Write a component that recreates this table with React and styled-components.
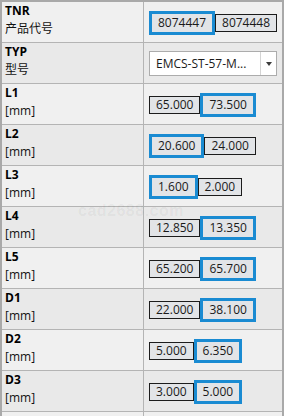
import React from "react";
import styled, { createGlobalStyle } from "styled-components";

const GlobalStyle = createGlobalStyle`
  html, body {
    margin: 0;
    padding: 0;
    background: #ffffff;
    overflow: hidden;
  }
  body {
    font-family: "Open Sans", "Noto Sans CJK SC", sans-serif;
    font-size: 12px;
    color: #111;
  }
`;

const rows = [
  { name: "TNR", unit: "产品代号", values: ["8074447", "8074448"], active: 0 },
  { name: "TYP", unit: "型号", select: "EMCS-ST-57-M..." },
  { name: "L1", unit: "[mm]", values: ["65.000", "73.500"], active: 1 },
  { name: "L2", unit: "[mm]", values: ["20.600", "24.000"], active: 0 },
  { name: "L3", unit: "[mm]", values: ["1.600", "2.000"], active: 0 },
  { name: "L4", unit: "[mm]", values: ["12.850", "13.350"], active: 1 },
  { name: "L5", unit: "[mm]", values: ["65.200", "65.700"], active: 1 },
  { name: "D1", unit: "[mm]", values: ["22.000", "38.100"], active: 1 },
  { name: "D2", unit: "[mm]", values: ["5.000", "6.350"], active: 1 },
  { name: "D3", unit: "[mm]", values: ["3.000", "5.000"], active: 1 },
];

const Table = styled.div`
  position: relative;
  width: 284px;
  box-sizing: border-box;
  border: 2px solid #a9a9a9;
  border-bottom: none;
`;

const Row = styled.div`
  display: flex;
  height: 41px;
  box-sizing: border-box;
  border-bottom: 1px solid #b4b4b4;
  background: ${({ $alt }) => ($alt ? "#e9e9e9" : "#f0f0f0")};
`;

const LabelCell = styled.div`
  width: 142px;
  flex: none;
  box-sizing: border-box;
  border-right: 1px solid #b4b4b4;
  padding-left: 3px;
  line-height: 18px;
`;

const Name = styled.div`
  font-weight: 700;
  color: #000;
`;

const Unit = styled.div`
  color: #111;
`;

const ValueCell = styled.div`
  flex: 1;
  display: flex;
  align-items: center;
  padding-left: 5px;
`;

const ChipGroup = styled.div`
  display: flex;
  align-items: center;
  margin-top: 2px;
`;

const Chip = styled.span`
  display: inline-flex;
  align-items: center;
  justify-content: center;
  box-sizing: border-box;
  height: ${({ $selected }) => ($selected ? "24px" : "18px")};
  padding: 0 6px;
  border: ${({ $selected }) =>
    $selected ? "3px solid #1a8bd2" : "1px solid #1c1c1c"};
  background: #e2e4e7;
  color: #1a1a1a;
  font-size: 12px;
  line-height: 1;
`;

const Select = styled.div`
  display: flex;
  width: 128px;
  height: 25px;
  box-sizing: border-box;
  border: 1px solid #acacac;
  background: #ffffff;
`;

const SelectText = styled.div`
  flex: 1;
  display: flex;
  align-items: center;
  padding-left: 6px;
  color: #1a1a1a;
  white-space: nowrap;
  overflow: hidden;
`;

const SelectButton = styled.div`
  width: 15px;
  flex: none;
  border-left: 1px solid #d4d4d4;
  display: flex;
  align-items: center;
  justify-content: center;

  &::after {
    content: "";
    border-left: 3.5px solid transparent;
    border-right: 3.5px solid transparent;
    border-top: 4px solid #3c3c3c;
    margin-top: 1px;
  }
`;

/* faint site stamp over the table */
const Watermark = styled.div`
  position: absolute;
  left: 76px;
  top: 203px;
  font-family: "Liberation Sans", Arial, sans-serif;
  font-size: 16px;
  line-height: 12px;
  font-weight: 700;
  letter-spacing: 0.5px;
  color: rgba(0, 0, 0, 0.05);
  pointer-events: none;
`;

export default function App() {
  return (
    <>
      <GlobalStyle />
      <Table>
        {rows.map((row, i) => (
          <Row key={row.name} $alt={i % 2 === 1}>
            <LabelCell>
              <Name>{row.name}</Name>
              <Unit>{row.unit}</Unit>
            </LabelCell>
            <ValueCell>
              {row.select ? (
                <Select>
                  <SelectText>{row.select}</SelectText>
                  <SelectButton />
                </Select>
              ) : (
                <ChipGroup>
                  {row.values.map((v, j) => (
                    <Chip key={j} $selected={j === row.active}>
                      {v}
                    </Chip>
                  ))}
                </ChipGroup>
              )}
            </ValueCell>
          </Row>
        ))}
        <Row>
          <LabelCell />
          <ValueCell />
        </Row>
        <Watermark>cad2688.com</Watermark>
      </Table>
    </>
  );
}
